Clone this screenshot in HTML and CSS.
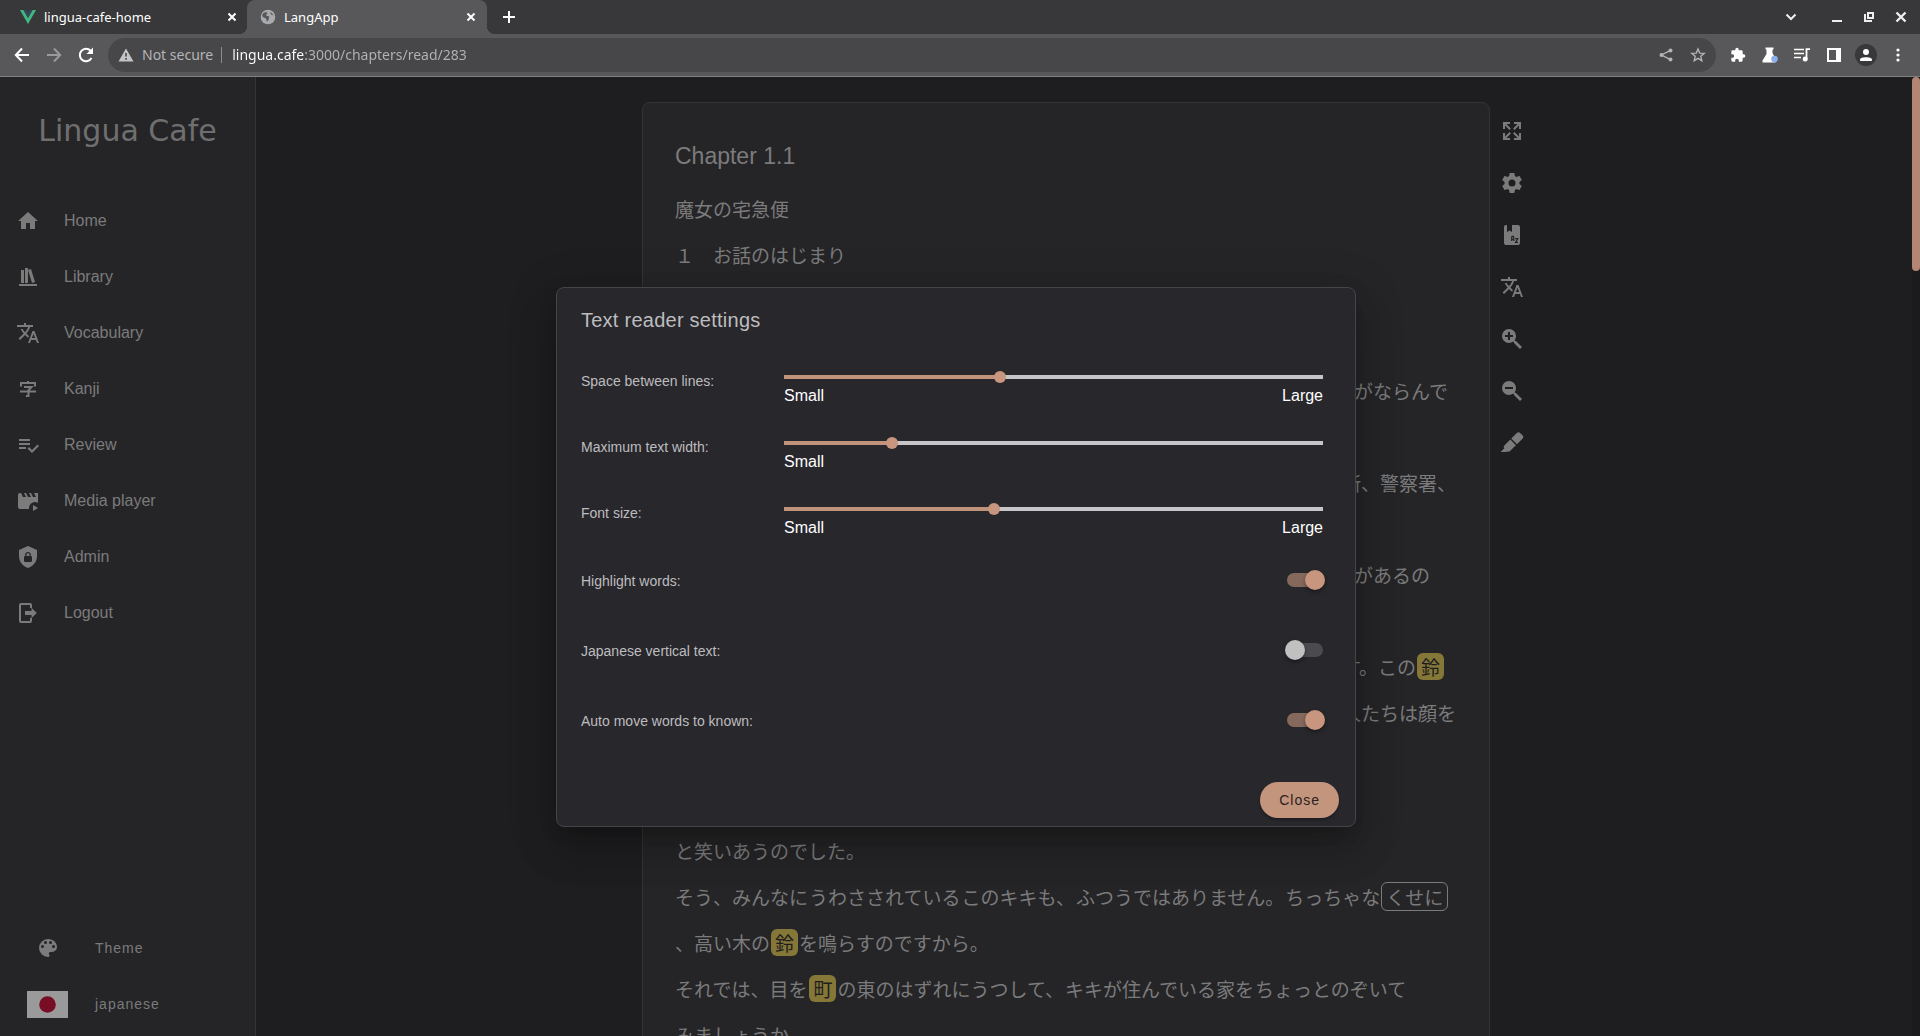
FILE: index.html
```html
<!DOCTYPE html>
<html lang="en">
<head>
<meta charset="utf-8">
<meta name="viewport" content="width=device-width, initial-scale=1">
<title>LangApp</title>
<link rel="stylesheet" href="styles.css">
</head>
<body>
<svg width="0" height="0" class="sprite" aria-hidden="true">
  <symbol id="i-translate" viewBox="0 0 24 24"><path d="M12.87,15.07L10.33,12.56L10.36,12.53C12.1,10.59 13.34,8.36 14.07,6H17V4H10V2H8V4H1V6H12.17C11.5,7.92 10.44,9.75 9,11.35C8.07,10.32 7.3,9.19 6.69,8H4.69C5.42,9.63 6.42,11.17 7.67,12.56L2.58,17.58L4,19L9,14L12.11,17.11L12.87,15.07M18.5,10H16.5L12,22H14L15.12,19H19.87L21,22H23L18.5,10M15.88,17L17.5,12.67L19.12,17H15.88Z"/></symbol>
  <symbol id="i-close" viewBox="0 0 16 16"><path d="M4.5 4.5L11.5 11.5M11.5 4.5L4.5 11.5" fill="none" stroke="currentColor" stroke-width="2"/></symbol>
</svg>

<header class="browser">
  <div class="tabbar">
    <div class="tab">
      <svg class="favicon" viewBox="0 0 16 16"><path d="M0 1H3.4L8 9L12.6 1H16L8 15Z" fill="#41b883"/><path d="M3.4 1H6.2L8 4.2L9.8 1H12.6L8 9Z" fill="#35495e"/></svg>
      <span class="tab-title">lingua-cafe-home</span>
      <button class="icon-btn" aria-label="Close tab"><svg class="s16"><use href="#i-close"/></svg></button>
    </div>
    <div class="tab active">
      <svg class="favicon" viewBox="0 0 16 16"><circle cx="8" cy="8" r="7.3" fill="#a9aaad"/><path d="M2.5 5C4 3 6 3 7 3.5C8 4.5 7 5.5 6 5.5C5.5 7 8 6.6 9 7.6C9.6 8.6 8.6 9.4 8.6 10.4C8 12 7 13 6.6 12C6.4 10.6 6.6 9.8 5.4 9.2C4 8.6 2.6 8 2.2 7ZM10 2.4C11 3.6 10 4.6 11 5.4C12 6 13 5.6 14 6.6" fill="#58585a"/></svg>
      <span class="tab-title">LangApp</span>
      <button class="icon-btn" aria-label="Close tab"><svg class="s16"><use href="#i-close"/></svg></button>
    </div>
    <button class="icon-btn new-tab" aria-label="New tab"><svg class="s16" viewBox="0 0 16 16"><path d="M8 2V14M2 8H14" stroke="currentColor" stroke-width="2"/></svg></button>
    <div class="window-controls">
      <button class="icon-btn search-tabs" aria-label="Search tabs"><svg class="s16" viewBox="0 0 16 16"><path d="M3.5 5.5L8 10L12.5 5.5" fill="none" stroke="currentColor" stroke-width="2"/></svg></button>
      <button class="icon-btn" aria-label="Minimize"><svg class="s16" viewBox="0 0 16 16"><path d="M3 12H13" stroke="currentColor" stroke-width="2"/></svg></button>
      <button class="icon-btn" aria-label="Restore"><svg class="s16" viewBox="0 0 16 16"><path d="M7 4H12V9H7ZM4 5V12H11" fill="none" stroke="currentColor" stroke-width="2"/></svg></button>
      <button class="icon-btn" aria-label="Close window"><svg class="s16" viewBox="0 0 16 16"><path d="M3.5 3.5L12.5 12.5M12.5 3.5L3.5 12.5" stroke="currentColor" stroke-width="2.4"/></svg></button>
    </div>
  </div>
  <div class="toolbar">
    <button class="icon-btn" aria-label="Back"><svg class="s20" viewBox="0 0 20 20"><path d="M17 10H4M10 3.5L3.8 10L10 16.5" fill="none" stroke="currentColor" stroke-width="2"/></svg></button>
    <button class="icon-btn disabled" aria-label="Forward"><svg class="s20" viewBox="0 0 20 20"><path d="M3 10H16M10 3.5L16.2 10L10 16.5" fill="none" stroke="currentColor" stroke-width="2"/></svg></button>
    <button class="icon-btn" aria-label="Reload"><svg class="s20" viewBox="0 0 20 20"><path d="M15.5 13A6.2 6.2 0 1 1 14.6 5.8" fill="none" stroke="currentColor" stroke-width="2"/><path d="M17 2.5V9H10.5Z" fill="currentColor"/></svg></button>
    <div class="omnibox">
      <svg class="s16 warn" viewBox="0 0 16 16"><path d="M8 1.5L15.5 14.5H.5Z" fill="currentColor"/><path d="M8 6V9.6M8 11V12.8" stroke="#474749" stroke-width="1.6"/></svg>
      <label class="secure" for="url">Not secure</label>
      <input class="url" id="url" type="text" value="lingua.cafe:3000/chapters/read/283">
      <button class="icon-btn" aria-label="Share"><svg class="s16" viewBox="0 0 16 16"><g fill="currentColor"><circle cx="12.5" cy="3.4" r="2"/><circle cx="12.5" cy="12.6" r="2"/><circle cx="3.5" cy="8" r="2"/></g><path d="M12.5 3.4L3.5 8L12.5 12.6" fill="none" stroke="currentColor" stroke-width="1.4"/></svg></button>
      <button class="icon-btn" aria-label="Bookmark"><svg class="s16" viewBox="0 0 16 16"><path d="M8 2L9.7 6.1L14.2 6.4L10.8 9.3L11.8 13.7L8 11.3L4.2 13.7L5.2 9.3L1.8 6.4L6.3 6.1Z" fill="none" stroke="currentColor" stroke-width="1.4"/></svg></button>
    </div>
    <div class="extensions">
      <button class="icon-btn" aria-label="Extensions"><svg class="s16" viewBox="0 0 24 24"><path fill="currentColor" d="M20.5,11H19V7C19,5.89 18.1,5 17,5H13V3.5A2.5,2.5 0 0,0 10.5,1A2.5,2.5 0 0,0 8,3.5V5H4A2,2 0 0,0 2,7V10.8H3.5C5,10.8 6.2,12 6.2,13.5C6.2,15 5,16.2 3.5,16.2H2V20A2,2 0 0,0 4,22H7.8V20.5C7.8,19 9,17.8 10.5,17.8C12,17.8 13.2,19 13.2,20.5V22H17A2,2 0 0,0 19,20V16H20.5A2.5,2.5 0 0,0 23,13.5A2.5,2.5 0 0,0 20.5,11Z"/></svg></button>
      <button class="icon-btn" aria-label="Labs"><svg class="s16" viewBox="0 0 16 16"><path d="M3.5 .5H11.5V2.5H10.5V6L13.5 12V15.5H.5V13.5L4.5 7V2.5H3.5Z" fill="currentColor"/><circle cx="12.5" cy="12" r="3.3" fill="#8ab0f0"/></svg></button>
      <button class="icon-btn" aria-label="Media"><svg class="s18" viewBox="0 0 18 18"><path d="M1 3.5H11M1 7.5H11M1 11.5H8" stroke="currentColor" stroke-width="1.7"/><path d="M13.5 13V3.2H17" fill="none" stroke="currentColor" stroke-width="1.8"/><circle cx="12.2" cy="13" r="2.5" fill="currentColor"/></svg></button>
      <button class="icon-btn" aria-label="Side panel"><svg class="s16" viewBox="0 0 16 16"><path fill="currentColor" fill-rule="evenodd" d="M1 1H15V15H1ZM3 3V13H10V3Z"/></svg></button>
      <button class="icon-btn avatar" aria-label="Profile"><svg class="s16" viewBox="0 0 16 16"><g fill="currentColor"><circle cx="8" cy="5" r="3"/><path d="M2 14V12.5C2 9.5 14 9.5 14 12.5V14Z"/></g></svg></button>
      <button class="icon-btn" aria-label="Menu"><svg class="s16" viewBox="0 0 16 16"><g fill="currentColor"><circle cx="8" cy="3" r="1.6"/><circle cx="8" cy="8" r="1.6"/><circle cx="8" cy="13" r="1.6"/></g></svg></button>
    </div>
  </div>
</header>

<div class="app">
  <aside class="sidebar">
    <h1 class="logo">Lingua Cafe</h1>
    <nav class="nav">
      <a href="#home"><svg class="s24" viewBox="0 0 24 24"><path d="M10,20V14H14V20H19V12H22L12,3L2,12H5V20H10Z"/></svg>Home</a>
      <a href="#library"><svg class="s24" viewBox="0 0 24 24"><path d="M9 3V18H12V3H9M12 5L16 18L19 17L15 4L12 5M5 5V18H8V5H5M3 19V21H21V19H3Z"/></svg>Library</a>
      <a href="#vocabulary"><svg class="s24"><use href="#i-translate"/></svg>Vocabulary</a>
      <a href="#kanji"><svg class="s24" viewBox="0 0 24 24"><path d="M5 9.5V6H19V9.5M12 4V6M8 10H15.5L12.5 13.2V19H10M4 14.5H20" fill="none" stroke="currentColor" stroke-width="2"/></svg>Kanji</a>
      <a href="#review"><svg class="s24" viewBox="0 0 24 24"><path d="M14 10H3V12H14V10M14 6H3V8H14V6M3 16H10V14H3V16M21.5 11.5L23 13L16 20L11.5 15.5L13 14L16 17L21.5 11.5Z"/></svg>Review</a>
      <a href="#media"><svg class="s24" viewBox="0 0 24 24"><path d="M18,4L20,8H17L15,4H13L15,8H12L10,4H8L10,8H7L5,4H4A2,2 0 0,0 2,6V18A2,2 0 0,0 4,20H13.1C13,19.7 13,19.3 13,19A6,6 0 0,1 19,13C20.1,13 21.1,13.3 22,13.8V4H18M17,16V22L22,19L17,16Z"/></svg>Media player</a>
      <a href="#admin"><svg class="s24" viewBox="0 0 24 24"><path d="M12,1L3,5V11C3,16.55 6.84,21.74 12,23C17.16,21.74 21,16.55 21,11V5L12,1M12,7C13.4,7 14.8,8.1 14.8,9.5V11C15.4,11 16,11.6 16,12.3V15.8C16,16.4 15.4,17 14.7,17H9.2C8.6,17 8,16.4 8,15.7V12.2C8,11.6 8.6,11 9.2,11V9.5C9.2,8.1 10.6,7 12,7M12,8.2C11.2,8.2 10.5,8.7 10.5,9.5V11H13.5V9.5C13.5,8.7 12.8,8.2 12,8.2Z"/></svg>Admin</a>
      <a href="#logout"><svg class="s24" viewBox="0 0 24 24"><path d="M14,2A2,2 0 0,1 16,4V7H14V4H5V20H14V17H16V20A2,2 0 0,1 14,22H5A2,2 0 0,1 3,20V4A2,2 0 0,1 5,2H14ZM9,10H15.5V6.8L20.8,12L15.5,17.2V14H9Z"/></svg>Logout</a>
    </nav>
    <div class="sidebar-foot">
      <button class="foot-btn"><span class="foot-icon"><svg class="s24" viewBox="0 0 24 24"><path d="M17.5,12A1.5,1.5 0 0,1 16,10.5A1.5,1.5 0 0,1 17.5,9A1.5,1.5 0 0,1 19,10.5A1.5,1.5 0 0,1 17.5,12M14.5,8A1.5,1.5 0 0,1 13,6.5A1.5,1.5 0 0,1 14.5,5A1.5,1.5 0 0,1 16,6.5A1.5,1.5 0 0,1 14.5,8M9.5,8A1.5,1.5 0 0,1 8,6.5A1.5,1.5 0 0,1 9.5,5A1.5,1.5 0 0,1 11,6.5A1.5,1.5 0 0,1 9.5,8M6.5,12A1.5,1.5 0 0,1 5,10.5A1.5,1.5 0 0,1 6.5,9A1.5,1.5 0 0,1 8,10.5A1.5,1.5 0 0,1 6.5,12M12,3A9,9 0 0,0 3,12A9,9 0 0,0 12,21A1.5,1.5 0 0,0 13.5,19.5C13.5,19.11 13.35,18.76 13.11,18.5C12.88,18.23 12.73,17.88 12.73,17.5A1.5,1.5 0 0,1 14.23,16H16A5,5 0 0,0 21,11C21,6.58 16.97,3 12,3Z"/></svg></span>Theme</button>
      <button class="foot-btn"><span class="foot-icon"><svg class="flag" viewBox="0 0 41 27"><path fill="#9a9a9a" d="M0 0H41V27H0Z"/><circle cx="20.5" cy="13.5" r="8.3" fill="#780d26"/></svg></span>japanese</button>
    </div>
  </aside>

  <main class="reader">
    <article class="page">
      <h2 class="chapter">Chapter 1.1</h2>
      <div class="text" lang="ja">
        <p>魔女の宅急便</p>
        <p>１　お話のはじまり</p>
        <p class="blank intro"></p>
        <p class="blank"></p>
        <p class="tail short">がならんで</p>
        <p class="blank"></p>
        <p class="tail">所、警察署、</p>
        <p class="blank"></p>
        <p class="tail short">があるの</p>
        <p class="blank"></p>
        <p class="tail">す。この<mark>鈴</mark></p>
        <p class="tail">人たちは顔を</p>
        <p class="blank"></p>
        <p class="blank"></p>
        <p>と笑いあうのでした。</p>
        <p><span>そう、みんなに</span><span>うわさされている</span><span>このキキも、</span><span>ふつうではありません。</span>ちっちゃな<span class="phrase">くせに</span></p>
        <p>、高い木の<mark>鈴</mark>を鳴らすのですから。</p>
        <p><span>それでは、目を</span><mark>町</mark>の東のはずれに<span>うつして、</span>キキが住んでいる<span>家を</span>ちょっとのぞいて</p>
        <p>みましょうか</p>
      </div>
    </article>
    <div class="tools">
      <button aria-label="Fullscreen"><svg class="s24" viewBox="0 0 24 24"><path d="M9.5,13.09L10.91,14.5L6.41,19H10V21H3V14H5V17.59L9.5,13.09M10.91,9.5L9.5,10.91L5,6.41V10H3V3H10V5H6.41L10.91,9.5M14.5,13.09L19,17.59V14H21V21H14V19H17.59L13.09,14.5L14.5,13.09M13.09,9.5L17.59,5H14V3H21V10H19V6.41L14.5,10.91L13.09,9.5Z"/></svg></button>
      <button aria-label="Settings"><svg class="s24" viewBox="0 0 24 24"><path d="M12,15.5A3.5,3.5 0 0,1 8.5,12A3.5,3.5 0 0,1 12,8.5A3.5,3.5 0 0,1 15.5,12A3.5,3.5 0 0,1 12,15.5M19.43,12.97C19.47,12.65 19.5,12.33 19.5,12C19.5,11.67 19.47,11.34 19.43,11L21.54,9.37C21.73,9.22 21.78,8.95 21.66,8.73L19.66,5.27C19.54,5.05 19.27,4.96 19.05,5.05L16.56,6.05C16.04,5.66 15.5,5.32 14.87,5.07L14.5,2.42C14.46,2.18 14.25,2 14,2H10C9.75,2 9.54,2.18 9.5,2.42L9.13,5.07C8.5,5.32 7.96,5.66 7.44,6.05L4.95,5.05C4.73,4.96 4.46,5.05 4.34,5.27L2.34,8.73C2.21,8.95 2.27,9.22 2.46,9.37L4.57,11C4.53,11.34 4.5,11.67 4.5,12C4.5,12.33 4.53,12.65 4.57,12.97L2.46,14.63C2.27,14.78 2.21,15.05 2.34,15.27L4.34,18.73C4.46,18.95 4.73,19.03 4.95,18.95L7.44,17.94C7.96,18.34 8.5,18.68 9.13,18.93L9.5,21.58C9.54,21.82 9.75,22 10,22H14C14.25,22 14.46,21.82 14.5,21.58L14.87,18.93C15.5,18.67 16.04,18.34 16.56,17.94L19.05,18.95C19.27,19.03 19.54,18.95 19.66,18.73L21.66,15.27C21.78,15.05 21.73,14.78 21.54,14.63L19.43,12.97Z"/></svg></button>
      <button aria-label="Glossary"><svg class="s24" viewBox="0 0 24 24"><path d="M6 2H7V9L9.5 7.5L12 9V2H18A2 2 0 0 1 20 4V20A2 2 0 0 1 18 22H6A2 2 0 0 1 4 20V4A2 2 0 0 1 6 2Z"/><path d="M11.7 18V14.2Q11.7 13.4 12.5 13.4H13Q13.8 13.4 13.8 14.2V18M11.7 16.2H13.8M15.3 15.6H17.8L15.5 19.4H18" fill="none" stroke="#1e1e20" stroke-width="1.1"/></svg></button>
      <button aria-label="Translate"><svg class="s24"><use href="#i-translate"/></svg></button>
      <button aria-label="Zoom in"><svg class="s24" viewBox="0 0 24 24"><path d="M9,2A7,7 0 0,1 16,9C16,10.57 15.5,12 14.61,13.19L15.41,14H16L22,20L20,22L14,16V15.41L13.19,14.61C12,15.5 10.57,16 9,16A7,7 0 0,1 2,9A7,7 0 0,1 9,2M8,5V8H5V10H8V13H10V10H13V8H10V5H8Z"/></svg></button>
      <button aria-label="Zoom out"><svg class="s24" viewBox="0 0 24 24"><path d="M9,2A7,7 0 0,1 16,9C16,10.57 15.5,12 14.61,13.19L15.41,14H16L22,20L20,22L14,16V15.41L13.19,14.61C12,15.5 10.57,16 9,16A7,7 0 0,1 2,9A7,7 0 0,1 9,2M5,8V10H13V8H5Z"/></svg></button>
      <button aria-label="Highlighter"><svg class="s24" viewBox="0 0 24 24"><path d="M18.5,1.15C17.97,1.15 17.46,1.34 17.07,1.73L11.26,7.55L16.91,13.2L22.73,7.39C23.5,6.61 23.5,5.35 22.73,4.56L19.89,1.73C19.5,1.34 19,1.15 18.5,1.15M10.3,8.5L4.34,14.46C3.56,15.24 3.56,16.5 4.36,17.31C3.14,18.54 1.9,19.77 .67,21H6.33L7.19,20.14C7.97,20.9 9.22,20.89 10,20.12L15.95,14.16"/></svg></button>
    </div>
  </main>

  <div class="scrollbar"><div class="scroll-thumb"></div></div>

  <div class="overlay">
    <section class="dialog" role="dialog" aria-labelledby="dialog-title">
      <h2 class="dialog-title" id="dialog-title">Text reader settings</h2>
      <div class="sliders">
        <div class="setting">
          <label for="line-space">Space between lines:</label>
          <div>
            <input class="slider" id="line-space" type="range" min="0" max="100" value="40" style="--fill:40%">
            <div class="ends"><span>Small</span><span>Large</span></div>
          </div>
        </div>
        <div class="setting">
          <label for="text-width">Maximum text width:</label>
          <div>
            <input class="slider" id="text-width" type="range" min="0" max="100" value="20" style="--fill:20%">
            <div class="ends"><span>Small</span></div>
          </div>
        </div>
        <div class="setting">
          <label for="font-size">Font size:</label>
          <div>
            <input class="slider" id="font-size" type="range" min="0" max="100" value="39" style="--fill:39%">
            <div class="ends"><span>Small</span><span>Large</span></div>
          </div>
        </div>
      </div>
      <div class="switches">
        <div class="toggle"><label for="highlight">Highlight words:</label><input class="switch" id="highlight" type="checkbox" checked></div>
        <div class="toggle"><label for="vertical">Japanese vertical text:</label><input class="switch" id="vertical" type="checkbox"></div>
        <div class="toggle"><label for="automove">Auto move words to known:</label><input class="switch" id="automove" type="checkbox" checked></div>
      </div>
      <footer class="actions"><button class="close-btn">Close</button></footer>
    </section>
  </div>
</div>
</body>
</html>
```

FILE: styles.css
```css
* { box-sizing: border-box; }

body {
  margin: 0;
  height: 100vh;
  display: flex;
  flex-direction: column;
  overflow: hidden;
  background: #1e1e20;
  color: #7b7b7c;
  font: 16px/24px "Liberation Sans", Arial, sans-serif;
}

h1, h2, p { margin: 0; font-weight: 400; }
button { padding: 0; border: 0; background: none; color: inherit; font: inherit; cursor: pointer; }
svg { display: block; flex: none; fill: currentColor; }
.sprite { position: absolute; }
.s16 { width: 16px; height: 16px; }
.s18 { width: 18px; height: 18px; }
.s20 { width: 20px; height: 20px; }
.s24 { width: 24px; height: 24px; }

/* Browser frame */
.browser {
  flex: none;
  border-bottom: 1px solid #818183;
  background: #58585a;
  color: #fff;
  font: 13px/20px "Noto Sans", sans-serif;
}
.icon-btn { display: grid; place-items: center; flex: none; width: 32px; height: 32px; }
.tabbar { display: flex; align-items: center; height: 34px; background: #38383a; }
.tab {
  position: relative;
  display: flex;
  align-items: center;
  flex: 0 1 240px;
  height: 34px;
  padding-left: 13px;
}
.tab:first-child { flex-basis: 247px; padding-left: 20px; }
.tab.active { border-radius: 8px 8px 0 0; background: #58585a; }
.tab.active::before, .tab.active::after {
  content: "";
  position: absolute;
  bottom: 0;
  width: 8px;
  height: 8px;
}
.tab.active::before { right: 100%; background: radial-gradient(circle at 0 0, #38383a 8px, #58585a 8px); }
.tab.active::after { left: 100%; background: radial-gradient(circle at 100% 0, #38383a 8px, #58585a 8px); }
.tab:first-child .icon-btn { margin-right: -1px; }
.favicon { width: 16px; height: 16px; }
.tab-title { flex: 1; padding-left: 8px; white-space: nowrap; }
.new-tab { margin-left: 6px; }
.window-controls { display: flex; margin: 0 3px 0 auto; color: #eee; }
.search-tabs { margin-right: 14px; }

.toolbar { display: flex; align-items: center; height: 42px; padding: 0 6px; }
.disabled { color: #9a9a9c; }
.omnibox {
  display: flex;
  align-items: center;
  flex: 1;
  min-width: 0;
  height: 34px;
  margin: 0 6px;
  padding: 0 2px 0 10px;
  border-radius: 17px;
  background: #474749;
  color: #b4b4b6;
  font-size: 14px;
}
.warn { color: #c4c4c6; }
.secure { padding: 0 8px; border-right: 1px solid #8c8c8e; line-height: 16px; white-space: nowrap; }
.url {
  flex: 1;
  min-width: 0;
  padding: 0 0 0 10px;
  border: 0;
  outline: 0;
  background: linear-gradient(90deg, #fff 83px, #b4b4b6 83px);
  -webkit-background-clip: text;
  background-clip: text;
  color: transparent;
  font: inherit;
}
.extensions { display: flex; }
.avatar svg { width: 22px; height: 22px; padding: 3px; border-radius: 50%; background: #38383a; }

/* App */
.app { position: relative; display: flex; flex: 1; min-height: 0; }
.sidebar {
  display: flex;
  flex-direction: column;
  flex: none;
  width: 256px;
  border-right: 1px solid #343436;
  background: #252527;
}
.logo {
  padding: 32px 0 40px;
  color: #6f6f70;
  text-align: center;
  font: 30px/44px "DejaVu Sans", sans-serif;
}
.nav a {
  display: flex;
  align-items: center;
  gap: 24px;
  height: 56px;
  padding-left: 16px;
  color: inherit;
  text-decoration: none;
}
.sidebar-foot { margin-top: auto; padding: 0 0 4px 20px; }
.foot-btn {
  display: flex;
  align-items: center;
  height: 56px;
  font-size: 14px;
  letter-spacing: 1px;
}
.foot-icon { display: grid; place-items: center; width: 55px; margin-right: 20px; }
.flag { width: 41px; height: 27px; }

.reader { display: flex; justify-content: center; flex: 1; min-width: 0; padding-top: 25px; overflow: hidden; }
.page {
  flex: 0 1 848px;
  min-width: 0;
  height: max-content;
  padding: 35px 32px;
  border: 1px solid #343436;
  border-radius: 8px;
  background: #252527;
}
.chapter { font-size: 23px; line-height: 36px; }
.text { padding-top: 12px; font: 19px/46px "Noto Sans CJK JP", sans-serif; white-space: nowrap; }
.text p { height: 46px; }
.text .intro { height: 44px; }
.text .tail { padding-left: 667px; }
.text .short { padding-left: 679px; }
.text span { margin-right: 1px; }
.text mark, .text .phrase { margin: 0 1px; padding: 0 4px; border-radius: 6px; }
.text mark { background: #857737; color: #1e1e20; }
.text .phrase { border: 1px solid #7b7b7c; }

.tools { display: flex; flex-direction: column; flex: none; gap: 16px; padding: 11px 0 0 8px; }
.tools button { display: grid; place-items: center; width: 28px; height: 36px; }

.scrollbar { flex: none; width: 8px; background: #1b1b1d; }
.scroll-thumb { height: 194px; border-radius: 4px; background: #b38572; }

/* Settings dialog */
.overlay { position: absolute; inset: 0 8px 0 0; display: grid; place-items: center; }
.dialog {
  width: 800px;
  max-width: 100%;
  padding-top: 18px;
  border: 1px solid #454548;
  border-radius: 8px;
  background: #28272c;
  color: #bdbdbf;
  font-size: 14px;
  line-height: 20px;
  box-shadow: 0 11px 15px -7px rgba(0, 0, 0, .2), 0 24px 38px 3px rgba(0, 0, 0, .14), 0 9px 46px 8px rgba(0, 0, 0, .12);
}
.dialog-title { padding: 0 24px; font-size: 20px; line-height: 28px; letter-spacing: 0.0125em; }
.sliders { display: grid; gap: 28px; padding: 37px 32px 4px 24px; }
.setting { display: grid; grid-template-columns: 203px 1fr; }
.slider {
  display: block;
  width: calc(100% + 12px);
  height: 12px;
  margin: 0 -6px;
  appearance: none;
  background: none;
}
.slider::-webkit-slider-runnable-track {
  height: 12px;
  background: linear-gradient(90deg, #c2937b var(--fill), #c6c6c8 var(--fill)) center / calc(100% - 12px) 4px no-repeat;
}
.slider::-webkit-slider-thumb {
  appearance: none;
  width: 12px;
  height: 12px;
  border-radius: 50%;
  background: #c8957e;
}
.ends { display: flex; justify-content: space-between; color: #fff; font-size: 16px; line-height: 26px; }
.toggle { display: flex; align-items: center; justify-content: space-between; height: 70px; padding: 0 32px 0 24px; }
.toggle label { padding-top: 2px; }
.switch {
  position: relative;
  width: 36px;
  height: 14px;
  margin: 0;
  appearance: none;
  border-radius: 7px;
  background: #4b4a4f;
}
.switch::before {
  content: "";
  position: absolute;
  top: -3px;
  left: -2px;
  width: 20px;
  height: 20px;
  border-radius: 50%;
  background: #c0c0c0;
  box-shadow: 0 2px 4px rgba(0, 0, 0, .4);
}
.switch:checked { background: #86695d; }
.switch:checked::before { left: 18px; background: #c8957e; }
.actions { display: flex; justify-content: flex-end; padding: 27px 16px 8px; }
.close-btn {
  height: 36px;
  padding: 0 19px;
  border-radius: 18px;
  background: #c4957d;
  color: #2a2120;
  font-size: 14px;
  letter-spacing: 1px;
  box-shadow: 0 2px 3px rgba(0, 0, 0, .3);
}
```
